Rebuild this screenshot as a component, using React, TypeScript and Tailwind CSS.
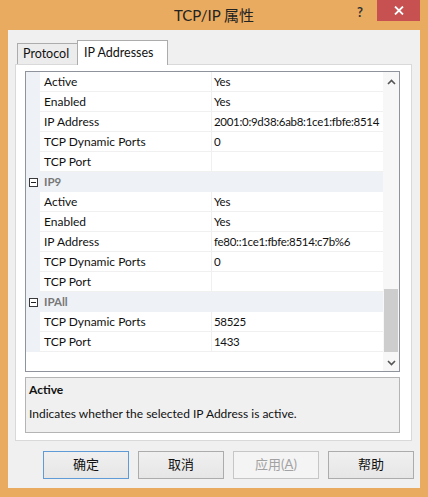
import React from "react";

type Row =
  | { kind: "prop"; label: string; value: string }
  | { kind: "cat"; label: string };

const ROWS: Row[] = [
  { kind: "prop", label: "Active", value: "Yes" },
  { kind: "prop", label: "Enabled", value: "Yes" },
  { kind: "prop", label: "IP Address", value: "2001:0:9d38:6ab8:1ce1:fbfe:8514" },
  { kind: "prop", label: "TCP Dynamic Ports", value: "0" },
  { kind: "prop", label: "TCP Port", value: "" },
  { kind: "cat", label: "IP9" },
  { kind: "prop", label: "Active", value: "Yes" },
  { kind: "prop", label: "Enabled", value: "Yes" },
  { kind: "prop", label: "IP Address", value: "fe80::1ce1:fbfe:8514:c7b%6" },
  { kind: "prop", label: "TCP Dynamic Ports", value: "0" },
  { kind: "prop", label: "TCP Port", value: "" },
  { kind: "cat", label: "IPAll" },
  { kind: "prop", label: "TCP Dynamic Ports", value: "58525" },
  { kind: "prop", label: "TCP Port", value: "1433" },
];

const FONT = "font-['Segoe_UI','Lato','Noto_Sans_CJK_SC',sans-serif]";

function Collapse() {
  return (
    <span className="flex h-[9px] w-[9px] items-center justify-center border border-[#3a3a3a] bg-white">
      <span className="h-px w-[5px] bg-[#222]" />
    </span>
  );
}

function GridRow({ row }: { row: Row }) {
  if (row.kind === "cat") {
    return (
      <div className="flex h-[20px] items-center bg-[#eef1f6]">
        <div className="flex w-[14px] justify-center pl-[1px]">
          <Collapse />
        </div>
        <span className="pl-[4px] text-[11.5px] font-bold text-[#777]">{row.label}</span>
      </div>
    );
  }
  return (
    <div className="flex h-[20px]">
      <div className="w-[14px] shrink-0 bg-[#eef1f6]" />
      <div className="flex w-[172px] shrink-0 items-center border-b border-r border-[#f0f0f0] pl-[4px] text-[#111]">
        {row.label}
      </div>
      <div className="flex min-w-0 flex-1 items-center whitespace-nowrap border-b border-[#f0f0f0] pl-[2px] text-[11.5px] tracking-[-0.3px] text-[#111]">
        {row.value}
      </div>
    </div>
  );
}

function Chevron({ up }: { up?: boolean }) {
  return (
    <svg width="9" height="6" viewBox="0 0 9 6" className={up ? "" : "rotate-180"}>
      <path d="M1 5 L4.5 1.5 L8 5" fill="none" stroke="#555" strokeWidth="1.6" />
    </svg>
  );
}

function Btn({
  children,
  primary,
  disabled,
}: {
  children: React.ReactNode;
  primary?: boolean;
  disabled?: boolean;
}) {
  return (
    <button
      className={
        "flex h-[28px] w-[86px] items-center justify-center border text-[13px] " +
        (primary
          ? "border-[#5f9bd6] bg-gradient-to-b from-[#f0f0f0] to-[#e6e6e6] text-[#111]"
          : disabled
            ? "border-[#c6c6c6] bg-[#f4f4f4] text-[#a2a2a2]"
            : "border-[#acacac] bg-gradient-to-b from-[#f0f0f0] to-[#e6e6e6] text-[#111]")
      }
    >
      {children}
    </button>
  );
}

export default function App() {
  return (
    <div className={`flex h-[497px] w-[428px] flex-col bg-[#e9ab60] ${FONT} text-[12px]`}>
      {/* title bar */}
      <div className="relative flex h-[30px] shrink-0 items-center justify-center">
        <span className="text-[15px] text-[#222]">TCP/IP 属性</span>
        <span className="absolute left-[357px] top-[3px] text-[13px] font-bold text-[#333]">?</span>
        <div className="absolute right-[8px] top-0 flex h-[21px] w-[43px] items-center justify-center bg-[#c75050]">
          <svg width="10" height="9" viewBox="0 0 10 9">
            <path d="M1 0.5 L9 8.5 M9 0.5 L1 8.5" stroke="#fff" strokeWidth="1.8" />
          </svg>
        </div>
      </div>

      {/* client area */}
      <div className="mx-[8px] mb-[9px] flex flex-1 flex-col bg-[#f0f0f0]">
        <div className="-mb-px flex items-end pl-[9px] pt-[10px]">
          <div className="flex h-[22px] w-[61px] items-center border border-b-0 border-[#acacac] bg-[#ececec] pl-[5px] text-[12.5px] text-[#111]">
            Protocol
          </div>
          <div className="relative z-10 -ml-px flex h-[25px] w-[91px] items-center border border-b-0 border-[#acacac] bg-white pl-[6px] text-[12.5px] text-[#111]">
            IP Addresses
          </div>
        </div>

        <div className="ml-[7px] flex h-[377px] w-[397px] flex-col border border-[#d9d9d9] bg-white pl-[9px] pt-[6px]">
          {/* property grid */}
          <div className="flex h-[301px] w-[375px] border border-[#8f949c]">
            <div className="flex min-w-0 flex-1 flex-col">
              {ROWS.map((r, i) => (
                <GridRow key={i} row={r} />
              ))}
            </div>
            <div className="flex w-[16px] shrink-0 flex-col bg-[#f7f7f7]">
              <div className="flex h-[17px] items-center justify-center pt-[3px]">
                <Chevron up />
              </div>
              <div className="flex-1 px-px">
                <div className="mt-[200px] h-[63px] bg-[#cdcdcd]" />
              </div>
              <div className="flex h-[17px] items-center justify-center">
                <Chevron />
              </div>
            </div>
          </div>

          {/* description */}
          <div className="mt-[5px] flex h-[56px] w-[375px] flex-col border border-[#b4b4b4] bg-[#f0f0f0] pl-[3px] pt-[3px] text-[#111]">
            <span className="font-bold">Active</span>
            <span className="mt-[6px]">Indicates whether the selected IP Address is active.</span>
          </div>
        </div>

        <div className="ml-[35px] mt-[10px] flex gap-[9px]">
          <Btn primary>确定</Btn>
          <Btn>取消</Btn>
          <Btn disabled>
            应用(<span className="underline">A</span>)
          </Btn>
          <Btn>帮助</Btn>
        </div>
      </div>
    </div>
  );
}
